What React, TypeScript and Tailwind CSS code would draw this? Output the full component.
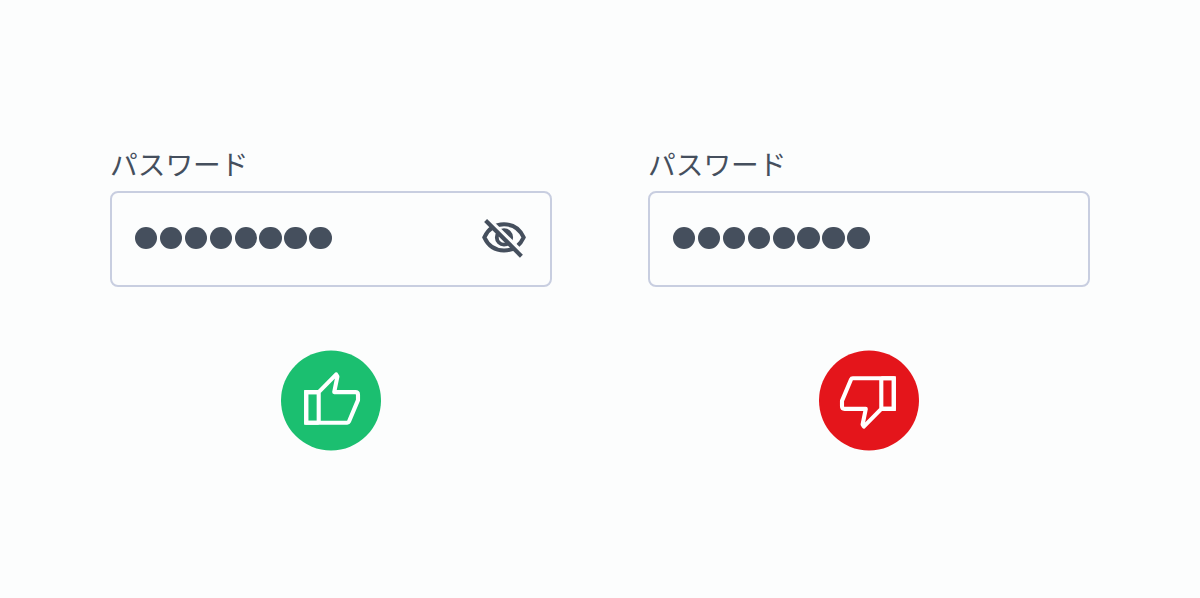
import React from 'react';

interface PasswordFieldProps {
  showToggle?: boolean;
}

interface ThumbBadgeProps {
  className?: string;
  down?: boolean;
}

const DOTS = Array.from({ length: 8 });

function EyeOffIcon({ className }: { className?: string }) {
  return (
    <svg viewBox="0 0 46 42" className={className} fill="none" stroke="currentColor">
      <defs>
        {/* Clears a gap along the upper side of the slash */}
        <mask id="slash-gap" maskUnits="userSpaceOnUse" x="0" y="0" width="46" height="42">
          <rect width="46" height="42" fill="white" stroke="none" />
          <path d="M4 -1L45 39.4" stroke="black" strokeWidth="4.4" />
        </mask>
      </defs>
      <g mask="url(#slash-gap)">
        <path
          d="M3.3 20.4C7 12.4 14 7.3 23 7.3S39 12.4 42.7 20.4C39 28.4 32 33.5 23 33.5S7 28.4 3.3 20.4Z"
          strokeWidth="4"
        />
        <circle cx="23" cy="20.4" r="7.2" strokeWidth="3.8" />
        <path d="M22 12.4A8 8 0 0 1 31 21.4L27 20.9L22.5 15.9Z" fill="currentColor" stroke="none" />
      </g>
      <path d="M4.6 3.4L40.4 39.2" strokeWidth="4.2" />
    </svg>
  );
}

function ThumbBadge({ className, down = false }: ThumbBadgeProps) {
  return (
    <svg
      viewBox="0 0 100 101"
      className={className}
      fill="none"
      stroke="white"
      strokeWidth="4.1"
      strokeLinejoin="round"
    >
      <circle cx="50" cy="50.5" r="50" fill="currentColor" stroke="none" />
      <g transform={down ? 'rotate(180 50 50.5)' : undefined}>
        <path d="M37.7 42.1H25.2V72.7H66.2Q67.5 72.7 68 71.5L77 50.1V44.7Q77 42.1 74.4 42.1H53.2L56.4 26.5L55.2 24.4L37.7 42.1V72.7" />
        {/* Square outer corners of the cuff */}
        <path d="M37.7 42.1H25.2V72.7H37.7" strokeLinejoin="miter" />
      </g>
    </svg>
  );
}

function PasswordField({ showToggle = false }: PasswordFieldProps) {
  return (
    <div className="w-full">
      <div className="h-[43px] text-[27.7px] leading-[30px] text-[#454f5d] font-['Noto_Sans_CJK_JP',sans-serif]">
        パスワード
      </div>
      <div className="flex h-24 items-center justify-between rounded-lg border-2 border-[#c8cee0] pr-[23px] pb-[2px] pl-[23px]">
        <div className="flex gap-[2.6px]">
          {DOTS.map((_, i) => (
            <span key={i} className="size-[22.3px] rounded-full bg-[#454f5d]" />
          ))}
        </div>
        {showToggle && <EyeOffIcon className="h-[42px] w-[46px] text-[#454f5d]" />}
      </div>
    </div>
  );
}

export default function App() {
  return (
    <main className="flex h-[598px] w-[1200px] justify-center gap-24 bg-[#fcfdfd] pt-[148px]">
      <section className="flex w-[442px] flex-col items-center">
        <PasswordField showToggle />
        <ThumbBadge className="mt-[63px] h-[101px] w-[100px] text-[#1bbf70]" />
      </section>
      <section className="flex w-[442px] flex-col items-center">
        <PasswordField />
        <ThumbBadge className="mt-[63px] h-[101px] w-[100px] text-[#e4151b]" down />
      </section>
    </main>
  );
}
